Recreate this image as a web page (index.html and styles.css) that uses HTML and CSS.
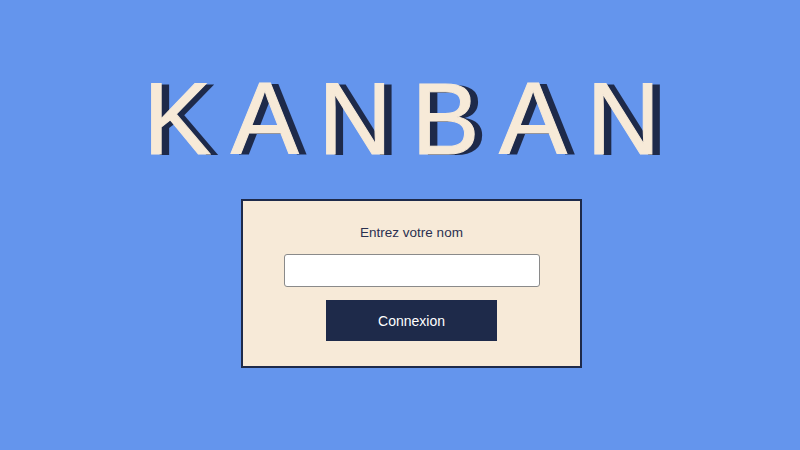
FILE: index.html
```html
<!DOCTYPE html>
<html lang="fr">
<head>
<meta charset="utf-8">
<title>Kanban</title>
<link rel="stylesheet" href="styles.css">
</head>
<body>
<main class="page">
  <h1 class="title">KANBAN</h1>
  <form class="card">
    <label class="label" for="name">Entrez votre nom</label>
    <input class="input" id="name" type="text">
    <button class="btn" type="button">Connexion</button>
  </form>
</main>
</body>
</html>
```
FILE: styles.css
```css
html, body {
  margin: 0;
  padding: 0;
  width: 800px;
  height: 450px;
  background: #6495ed;
  overflow: hidden;
}
.page {
  display: flex;
  flex-direction: column;
  align-items: center;
  padding-left: 23px;
  box-sizing: border-box;
  width: 800px;
  height: 450px;
}
.title {
  margin: 64px 0 0 0;
  font-family: "Liberation Sans", Arial, sans-serif;
  font-weight: 400;
  font-size: 102px;
  line-height: 110px;
  letter-spacing: 19.5px;
  color: #f7ead8;
  -webkit-text-stroke: 1px #f7ead8;
  text-shadow: 8px 1px 0 #1e2a4a;
}
.card {
  margin-top: 25px;
  width: 341px;
  height: 169px;
  box-sizing: border-box;
  background: #f7ead8;
  border: 2px solid #1e2a4a;
  display: flex;
  flex-direction: column;
  align-items: center;
  padding-top: 24px;
}
.label {
  font-family: "Liberation Sans", Arial, sans-serif;
  font-size: 13.5px;
  line-height: 16px;
  color: #2a3050;
}
.input {
  margin-top: 13px;
  width: 256px;
  height: 33px;
  box-sizing: border-box;
  border: 1px solid #8a8a8a;
  border-radius: 3px;
  background: #fff;
}
.btn {
  margin-top: 13px;
  width: 171px;
  height: 41px;
  border: none;
  background: #1e2a4a;
  color: #fff;
  font-family: "Liberation Sans", Arial, sans-serif;
  font-size: 14px;
}
```
